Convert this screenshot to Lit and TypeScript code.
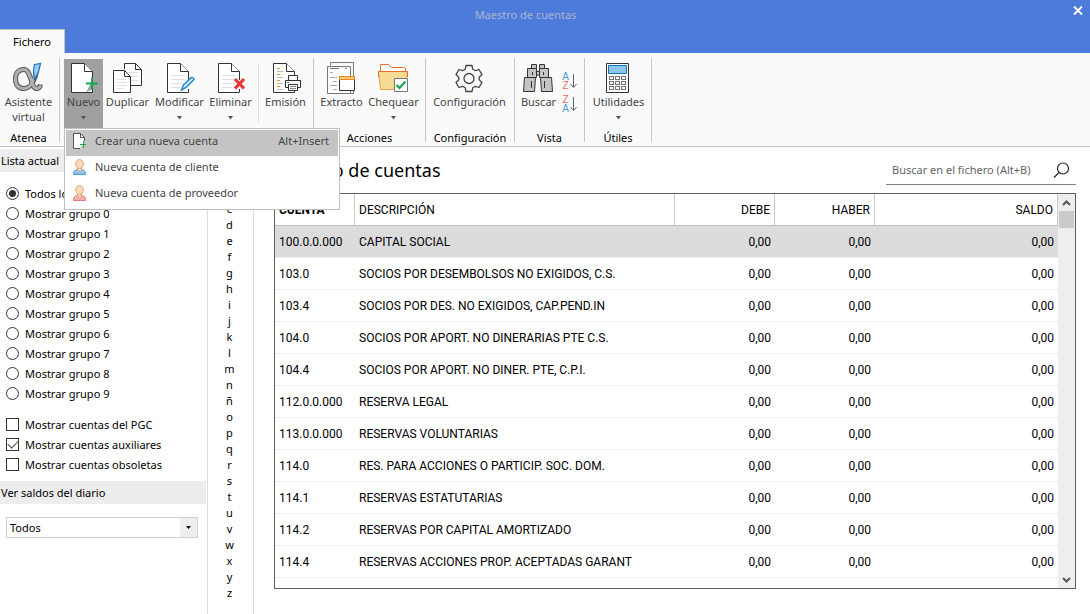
import { LitElement, html, svg, css, nothing, TemplateResult } from "lit";
import { customElement, property, state } from "lit/decorators.js";
import { classMap } from "lit/directives/class-map.js";

const page = svg`
  <path d="M19 32.5H4.5V3.5H17.5L25.5 11.5V20M25.5 29V32.5H19" fill="#fff" stroke="#333"/>
  <path d="M17.5 3.5V11.5H25.5" fill="#fff" stroke="#333"/>`;
const pageLines = svg`<path d="M8 15.5H22M8 19.5H22M8 23.5H20M8 27.5H18" stroke="#e2e2e2"/>`;

const icons: Record<string, TemplateResult> = {
  asistente: svg`
    <path d="M24.500 11C23.500 19 19 28.500 12 28.500C6.500 28.500 3.500 25 3.500 19C3.500 13 6.500 9.500 12 9.500C19.500 9.500 18.500 28.500 24.500 28.500C27 28.500 28 27 28.500 24.500" fill="none" stroke="#555" stroke-width="5"/>
    <path d="M23.500 13C22 20 18.500 28.500 12 28.500C6.500 28.500 3.500 25 3.500 19C3.500 13 6.500 9.500 12 9.500C19.500 9.500 18.500 28.500 24.500 28.500C26.500 28.500 28 27 28.500 25.300" fill="none" stroke="#b0b0b0" stroke-width="3"/>
    <path d="M22.500 4.500L28.500 3.500L26.500 12L22.500 19.500L21.500 11Z" fill="#9ccdf2" stroke="#1c75b8" stroke-width="1.200"/>`,
  nuevo: svg`${page}<path d="M19 23.500H31M25 17.500V29.500" stroke="#12a84c" stroke-width="2"/>`,
  duplicar: svg`
    <path d="M13.500 9V3.500H24.500L30.500 9.500V25.500H19" fill="#fff" stroke="#333"/>
    <path d="M24.500 3.500V9.500H30.500" fill="none" stroke="#333"/>
    <path d="M17 12.500H27M20 16.500H27M20 20.500H27" stroke="#ddd"/>
    <path d="M2.500 10.500H13.500L19.500 16.500V32.500H2.500Z" fill="#fff" stroke="#333"/>
    <path d="M13.500 10.500V16.500H19.500" fill="none" stroke="#333"/>
    <path d="M6 19.500H16M6 22.500H16M6 25.500H16M6 28.500H14" stroke="#e2e2e2"/>`,
  modificar: svg`${page}${pageLines}
    <path d="M18.500 30L20.500 25L28.500 17.500Q30.500 17 31 19.500L23 27.500Z" fill="#dff0fc" stroke="#2289cc" stroke-width="1.500"/>`,
  eliminar: svg`${page}${pageLines}
    <path d="M21 19L30 28.500M30 19L21 28.500" stroke="#ec3636" stroke-width="3.200"/>`,
  emision: svg`${page}
    <path d="M8 8.500H11M8 14.500H11M8 20.500H11M8 26.500H11" stroke="#ee9420"/>
    <path d="M8 11.500H14M8 17.500H14M8 23.500H14M8 29.500H14" stroke="#bbb"/>
    <path d="M15 17H34V31H15Z" fill="#fafafa"/>
    <path d="M19.500 20V15.500H28.500V20M16.500 20.500H31.500V27.500H16.500Z" fill="#fff" stroke="#333"/>
    <path d="M19.500 24.500H28.500V30.500H19.500Z" fill="#fff" stroke="#333"/>
    <path d="M21 26.500H27M21 28.500H27" stroke="#888"/><path d="M18 22.500H20" stroke="#2289cc"/>`,
  extracto: svg`
    <path d="M5.500 5.500V2.500H28.500V28.500M25.500 33.500H28.500V30" fill="none" stroke="#777"/>
    <path d="M2.500 6.500H25.500V33.500H2.500Z" fill="#fff" stroke="#777"/>
    <path d="M5 8.500H14M20 8.500H22" stroke="#777"/>
    <path d="M5 12.500H8M5 17.500H12M8 21.500H12M5 25.500H12M8 29.500H12" stroke="#aaa"/>
    <path d="M14.500 16.500H29.500V30.500H14.500Z" fill="#fff" stroke="#333"/>
    <path d="M14.500 16.500H29.500V19.500H14.500Z" fill="#f6c878" stroke="#e88a1a"/>`,
  chequear: svg`
    <path d="M1.500 11.500H30.500L28.500 29.500H3.500Z" fill="#f7db94" stroke="#e5a34f"/>
    <path d="M3.500 11.500V4.500H11.500L14.500 7.500H26.500L28.500 8.500V11.500" fill="#fff" stroke="#e5702a"/>
    <path d="M1.500 17V11.500H30.500V17" fill="none" stroke="#e5702a"/>
    <path d="M17.500 18.500H30.500V31.500H17.500Z" fill="#fff" stroke="#777"/>
    <path d="M19.500 25L22.500 28L28.500 21.500" fill="none" stroke="#12a84c" stroke-width="2.200"/>`,
  configuracion: svg`
    <path d="M13 5.500H19L19.800 9.300L22.300 10.700L26 9.500L29 14.600L26.200 17.200V19.800L29 22.400L26 27.500L22.300 26.300L19.800 27.700L19 31.500H13L12.200 27.700L9.700 26.300L6 27.500L3 22.400L5.800 19.800V17.200L3 14.600L6 9.500L9.700 10.700L12.200 9.300Z" fill="none" stroke="#444" stroke-width="1.300" stroke-linejoin="round"/>
    <circle cx="16" cy="18.500" r="5" fill="none" stroke="#444" stroke-width="1.300"/>`,
  buscar: svg`
    <g fill="#c4c4c4" stroke="#333"><path d="M9.500 4.500H14.500V8.500H9.500ZM17.500 4.500H22.500V8.500H17.500Z"/>
    <path d="M14 11.500H18V15H14Z"/>
    <path d="M5.500 8.500H14.500V17.500H5.500ZM17.500 8.500H26.500V17.500H17.500Z"/>
    <path d="M2.500 17.500H13.500L12.500 31.500H1.500ZM18.500 17.500H29.500L30.500 31.500H19.500Z"/></g>
    <path d="M9.500 21V28M22.500 21V28M10.500 12V15M21.500 12V15" stroke="#333"/>`,
  utilidades: svg`
    <path d="M4.500 3.500H26.500V32.500H4.500Z" fill="#fff" stroke="#333"/>
    <path d="M6.500 5.500H24.500V13.500H6.500Z" fill="#8ec6f0" stroke="#1473b8"/>
    <g fill="#fff" stroke="#777">${[16.5, 21.5, 26.5].map((y) =>
      [7.5, 13.5, 19.5].map((x) => svg`<rect x=${x} y=${y} width="4" height="3"/>`)
    )}</g>`,
};

@customElement("ribbon-button")
class RibbonButton extends LitElement {
  @property() icon = "";
  @property() label = "";
  @property({ type: Boolean }) arrow = false;
  @property({ type: Boolean, reflect: true }) active = false;

  static styles = css`
    :host { display: flex; }
    .button {
      width: 100%; height: 69px; padding: 1px 0 0; border: 0; background: none;
      display: flex; flex-direction: column; align-items: center;
      font: 11px/16px "Noto Sans", "Open Sans", sans-serif; color: #444; cursor: pointer;
    }
    :host([active]) .button { background: #a0a0a0; }
    .icon { display: block; width: 33px; height: 33px; flex: none; overflow: visible; }
    .label { line-height: 15px; padding-top: 1px; text-align: center; }
    .arrow { width: 7px; height: 4px; margin-top: 7px; }
  `;

  render() {
    return html`<button class="button" type="button"
      aria-haspopup=${this.arrow ? "menu" : nothing} aria-expanded=${this.arrow ? String(this.active) : nothing}>
      <svg class="icon" viewBox="0 0 33 33" aria-hidden="true">${icons[this.icon]}</svg>
      <span class="label">${this.label}</span>
      ${this.arrow ? html`<svg class="arrow" viewBox="0 0 7 4" aria-hidden="true"><path d="M1 0H6L3.500 3.500Z" fill="#555"/></svg>` : nothing}
    </button>`;
  }
}

const person = (fill: string, line: string) => svg`
  <path d="M1.500 15.500C1.500 11.500 3 10.500 7.500 10.500S13.500 11.500 13.500 15.500Z" fill=${fill} stroke=${line}/>
  <path d="M5.500 8V11.500Q7.500 13 9.500 11.500V8" fill="#fbd9b8" stroke="#dca878"/>
  <ellipse cx="7.500" cy="5" rx="3.800" ry="4.500" fill="#fbd9b8" stroke="#dca878"/>`;

const menuItems = [
  { label: "Crear una nueva cuenta", key: "Alt+Insert", art: svg`
    <path d="M8 15.500H1.500V0.500H8.500L12.500 4.500V8" fill="#fff" stroke="#555"/>
    <path d="M8.500 0.500V4.500H12.500" fill="none" stroke="#555"/>
    <path d="M8 11.500H14M11.500 8V15" stroke="#12a84c"/>` },
  { label: "Nueva cuenta de cliente", key: "", art: person("#8ec4ee", "#4f9fdc") },
  { label: "Nueva cuenta de proveedor", key: "", art: person("#f2b0b0", "#ec7474") },
];

const rows = [
  ["100.0.0.000", "CAPITAL SOCIAL"],
  ["103.0", "SOCIOS POR DESEMBOLSOS NO EXIGIDOS, C.S."],
  ["103.4", "SOCIOS POR DES. NO EXIGIDOS, CAP.PEND.IN"],
  ["104.0", "SOCIOS POR APORT. NO DINERARIAS PTE C.S."],
  ["104.4", "SOCIOS POR APORT. NO DINER. PTE, C.P.I."],
  ["112.0.0.000", "RESERVA LEGAL"],
  ["113.0.0.000", "RESERVAS VOLUNTARIAS"],
  ["114.0", "RES. PARA ACCIONES O PARTICIP. SOC. DOM."],
  ["114.1", "RESERVAS ESTATUTARIAS"],
  ["114.2", "RESERVAS POR CAPITAL AMORTIZADO"],
  ["114.4", "RESERVAS ACCIONES PROP. ACEPTADAS GARANT"],
];

const groups = ["Todos los grupos", ...Array.from({ length: 10 }, (_, i) => `Mostrar grupo ${i}`)];
const checks = [
  { label: "Mostrar cuentas del PGC", on: false },
  { label: "Mostrar cuentas auxiliares", on: true },
  { label: "Mostrar cuentas obsoletas", on: false },
];

@customElement("app-root")
class AppRoot extends LitElement {
  @state() private selected = 0;

  static styles = css`
    :host {
      display: flex; flex-direction: column; height: 100vh; overflow: hidden;
      background: #fff; color: #000; font: 11px/16px "Noto Sans", "Open Sans", sans-serif;
    }
    * { box-sizing: border-box; }
    button, input, select { font: inherit; color: inherit; }

    .titlebar {
      position: relative; flex: none; height: 53px; background: #4d7bdb;
      display: flex; flex-direction: column; justify-content: space-between;
    }
    .title { margin: 0; padding: 7px 39px 0 0; font-size: 11px; font-weight: 400; text-align: center; color: #a9b4cc; }
    .close { position: absolute; top: 3px; right: 4px; width: 16px; height: 16px; padding: 0; border: 0; background: none; }
    .close svg { display: block; }
    .tab {
      align-self: flex-start; width: 65px; height: 24px; padding: 0; border: solid #c4c4c4; border-width: 1px 1px 0 0;
      background: #fafafa; text-align: center;
    }

    .ribbon { flex: none; display: flex; height: 94px; padding-top: 5px; background: #fafafa; border-bottom: 1px solid #c4c4c4; }
    .group { display: flex; flex-direction: column; height: 84px; padding: 1px 0 0; border-right: 1px solid #c8c8c8; }
    .buttons { display: flex; flex: none; height: 69px; padding: 0 4px; }
    .caption { line-height: 20px; text-align: center; }
    .intro { padding: 0 5px 0 3px; }
    .intro-caption { padding-right: 2px; }
    .actions { gap: 3px; padding-right: 6px; }
    .setup { padding-left: 3px; }
    .view { padding: 0 7px 0 3px; gap: 3px; }
    .tools { padding: 0 2px 0 3px; }
    .w39 { width: 39px; } .w41 { width: 41px; } .w47 { width: 47px; } .w49 { width: 49px; }
    .w51 { width: 51px; } .w55 { width: 55px; } .w61 { width: 61px; } .w81 { width: 81px; }
    .rule { width: 1px; height: 58px; margin: 5px 3px 0 4px; background: #dedede; }
    .anchor { position: relative; }
    .sorts { display: flex; flex-direction: column; gap: 5px; padding-top: 13px; }
    .sort {
      display: flex; align-items: center; width: 15px; height: 18px; padding: 0; border: 0; background: none;
      font-family: "Liberation Sans", sans-serif; font-size: 10px; line-height: 9px; color: #ec6a6a;
    }
    .sort-letters { display: grid; width: 7px; text-align: center; }
    .sort-a { color: #4a9bd6; }
    .sort svg { display: block; flex: none; }

    .menu {
      position: absolute; z-index: 5; top: 69px; left: 0; width: 276px; height: 82px; padding: 1px;
      background: #fff; border: 1px solid #c0c0c0; color: #444;
    }
    .item {
      display: flex; align-items: center; width: 100%; height: 26px; padding: 0 9px 4px 6px;
      border: 0; background: none; text-align: left;
    }
    .item.current { background: #c4c4c4; }
    .item svg { flex: none; margin-right: 8px; }
    .item-label { flex: 1; }

    .body { flex: 1; min-height: 0; display: flex; }
    .side { flex: none; width: 208px; padding-top: 2px; border-right: 1px solid #dcdcdc; }
    .side-title { margin: 0 1px 0 0; padding: 4px 1px 3px; background: #ededed; font-size: 11px; font-weight: 400; line-height: 16px; }
    .choices { margin: 0; padding: 12px 6px 0; border: 0; }
    .checks { padding: 11px 6px 6px; }
    .choice { display: flex; align-items: center; gap: 6px; height: 20px; }
    .box {
      appearance: none; flex: none; width: 13px; height: 13px; margin: 0 0 1px; border: 1px solid #333; background: #fff;
      display: grid; place-items: center;
    }
    .radio { border-radius: 50%; }
    .radio:checked::before { content: ""; width: 7px; height: 7px; border-radius: 50%; background: #333; }
    .tick:checked::before {
      content: ""; width: 9px; height: 5px; margin-bottom: 3px;
      border: solid #444; border-width: 0 0 1px 1px; transform: rotate(-45deg);
    }
    .combo { display: grid; margin: 13px 9px 0 6px; height: 21px; border: 1px solid #d0d0d0; grid-template-columns: 1fr 17px; }
    .select {
      grid-area: 1 / 1 / 2 / 3; appearance: none; width: 100%; padding: 0 20px 0 3px; border: 0;
      border-radius: 0; background: none;
    }
    .combo-arrow { grid-area: 1 / 2; background: #eee; display: grid; place-items: center; pointer-events: none; }

    .letters {
      flex: none; width: 46px; margin: 0; padding: 22px 2px 0 0; border-right: 1px solid #dcdcdc; list-style: none;
      text-align: center;
    }
    .letter { display: block; width: 100%; height: 16px; padding: 0; border: 0; background: none; line-height: 16px; }

    .main { flex: 1; min-width: 0; display: flex; flex-direction: column; padding: 9px 14px 25px 20px; }
    .head { display: flex; justify-content: space-between; align-items: flex-start; height: 37px; }
    .heading { margin: 0; font-size: 18px; font-weight: 400; line-height: 28px; }
    .search { display: flex; align-items: center; width: 190px; height: 29px; padding: 0 6px; border-bottom: 1px solid #808080; }
    .search-input { flex: 1; min-width: 0; padding: 0; border: 0; outline: 0; background: none; }
    .search-input::placeholder { color: #666; opacity: 1; }
    .search-button { padding: 0; border: 0; background: none; }
    .search-button svg { display: block; }

    .grid { flex: 1; min-height: 0; display: flex; border: 1px solid #5f5f5f; overflow: hidden; }
    .scroll { flex: 1; min-width: 0; overflow: hidden; }
    .table {
      width: 100%; border-collapse: separate; border-spacing: 0; table-layout: fixed;
      font-family: Roboto, "Noto Sans", sans-serif; font-size: 12px;
    }
    .th, .td { height: 32px; padding: 0 4px; text-align: left; font-weight: 400; white-space: nowrap; border-bottom: 1px solid #eee; }
    .th { border-bottom-color: #c0c0c0; border-right: 1px solid #c8c8c8; }
    .th.sorted { font-weight: 700; }
    .num { text-align: right; }
    .row.current .td { background: #dcdcdc; }
    .c-code { width: 80px; } .c-desc { width: 320px; } .c-num { width: 100px; }
    .bar { flex: none; width: 17px; display: flex; flex-direction: column; background: #eee; }
    .step { height: 17px; padding: 0; border: 0; background: none; display: grid; place-items: center; }
    .thumb { height: 17px; margin: 0 1px; background: #cacaca; }
    .track { flex: 1; }
  `;

  private sort(letters: string[], label: string) {
    return html`<button class="sort" type="button" aria-label=${label}>
      <span class="sort-letters">${letters.map((l) => html`<span class=${classMap({ "sort-a": l === "A" })}>${l}</span>`)}</span>
      <svg width="8" height="16" viewBox="0 0 8 16" aria-hidden="true">
        <path d="M4.500 1V14M1.500 11L4.500 14.500L7.500 11" fill="none" stroke="#666"/>
      </svg></button>`;
  }

  render() {
    return html`
      <header class="titlebar">
        <h1 class="title">Maestro de cuentas</h1>
        <button class="close" type="button" aria-label="Cerrar">
          <svg width="16" height="16"><path d="M4 3.500L12 11.500M12 3.500L4 11.500" stroke="#fff" stroke-width="1.800"/></svg>
        </button>
        <button class="tab" type="button">Fichero</button>
      </header>

      <nav class="ribbon">
        <div class="group">
          <div class="buttons intro"><ribbon-button class="w51" icon="asistente" label="Asistente virtual"></ribbon-button></div>
          <div class="caption intro-caption">Atenea</div>
        </div>
        <div class="group">
          <div class="buttons">
            <div class="anchor">
              <ribbon-button class="w39" icon="nuevo" label="Nuevo" arrow active></ribbon-button>
              <div class="menu" role="menu">
                ${menuItems.map((m, i) => html`
                  <button class=${classMap({ item: true, current: i === 0 })} type="button" role="menuitem">
                    <svg width="15" height="16" viewBox="0 0 15 16" aria-hidden="true">${m.art}</svg>
                    <span class="item-label">${m.label}</span><span>${m.key}</span>
                  </button>`)}
              </div>
            </div>
            <ribbon-button class="w49" icon="duplicar" label="Duplicar"></ribbon-button>
            <ribbon-button class="w55" icon="modificar" label="Modificar" arrow></ribbon-button>
            <ribbon-button class="w47" icon="eliminar" label="Eliminar" arrow></ribbon-button>
            <div class="rule"></div>
            <ribbon-button class="w47" icon="emision" label="Emisión"></ribbon-button>
          </div>
        </div>
        <div class="group">
          <div class="buttons actions">
            <ribbon-button class="w47" icon="extracto" label="Extracto"></ribbon-button>
            <ribbon-button class="w51" icon="chequear" label="Chequear" arrow></ribbon-button>
          </div>
          <div class="caption">Acciones</div>
        </div>
        <div class="group">
          <div class="buttons setup"><ribbon-button class="w81" icon="configuracion" label="Configuración"></ribbon-button></div>
          <div class="caption">Configuración</div>
        </div>
        <div class="group">
          <div class="buttons view">
            <ribbon-button class="w41" icon="buscar" label="Buscar"></ribbon-button>
            <div class="sorts">
              ${this.sort(["A", "Z"], "Orden ascendente")}
              ${this.sort(["Z", "A"], "Orden descendente")}
            </div>
          </div>
          <div class="caption">Vista</div>
        </div>
        <div class="group">
          <div class="buttons tools"><ribbon-button class="w61" icon="utilidades" label="Utilidades" arrow></ribbon-button></div>
          <div class="caption">Útiles</div>
        </div>
      </nav>

      <div class="body">
        <aside class="side">
          <h2 class="side-title">Lista actual</h2>
          <fieldset class="choices" aria-label="Lista actual">
            ${groups.map((g, i) => html`<label class="choice">
              <input class="box radio" type="radio" name="grupo" .checked=${i === 0}>${g}</label>`)}
          </fieldset>
          <div class="checks">
            ${checks.map((c) => html`<label class="choice">
              <input class="box tick" type="checkbox" .checked=${c.on}>${c.label}</label>`)}
          </div>
          <h2 class="side-title" id="saldos">Ver saldos del diario</h2>
          <div class="combo">
            <select class="select" aria-labelledby="saldos"><option>Todos</option></select>
            <span class="combo-arrow"><svg width="5" height="3"><path d="M0 0H5L2.500 3Z"/></svg></span>
          </div>
        </aside>
        <ul class="letters">
          ${[..."abcdefghijklmnñopqrstuvwxyz"].map((l) => html`<li><button class="letter" type="button">${l}</button></li>`)}
        </ul>
        <main class="main">
          <div class="head">
            <h2 class="heading">Maestro de cuentas</h2>
            <div class="search">
              <input class="search-input" type="text" aria-label="Buscar en el fichero" placeholder="Buscar en el fichero (Alt+B)">
              <button class="search-button" type="button" aria-label="Buscar">
                <svg width="17" height="17"><circle cx="10" cy="6.500" r="5.500" fill="none" stroke="#222" stroke-width="1.200"/><path d="M6 10.500L1 15.500" stroke="#222" stroke-width="1.200"/></svg>
              </button>
            </div>
          </div>
          <div class="grid">
            <div class="scroll">
              <table class="table">
                <thead><tr>
                  <th class="th sorted c-code">CUENTA</th><th class="th c-desc">DESCRIPCIÓN</th>
                  <th class="th num c-num">DEBE</th><th class="th num c-num">HABER</th><th class="th num">SALDO</th>
                </tr></thead>
                <tbody>
                  ${rows.map((r, i) => html`<tr class=${classMap({ row: true, current: i === this.selected })} @click=${() => (this.selected = i)}>
                    <td class="td">${r[0]}</td><td class="td">${r[1]}</td>
                    <td class="td num">0,00</td><td class="td num">0,00</td><td class="td num">0,00</td></tr>`)}
                </tbody>
              </table>
            </div>
            <div class="bar">
              <button class="step" type="button" aria-label="Subir"><svg width="9" height="6"><path d="M1 5L4.500 1.500L8 5" fill="none" stroke="#555" stroke-width="2"/></svg></button>
              <div class="thumb"></div>
              <div class="track"></div>
              <button class="step" type="button" aria-label="Bajar"><svg width="9" height="6"><path d="M1 1L4.500 4.500L8 1" fill="none" stroke="#555" stroke-width="2"/></svg></button>
            </div>
          </div>
        </main>
      </div>`;
  }
}
